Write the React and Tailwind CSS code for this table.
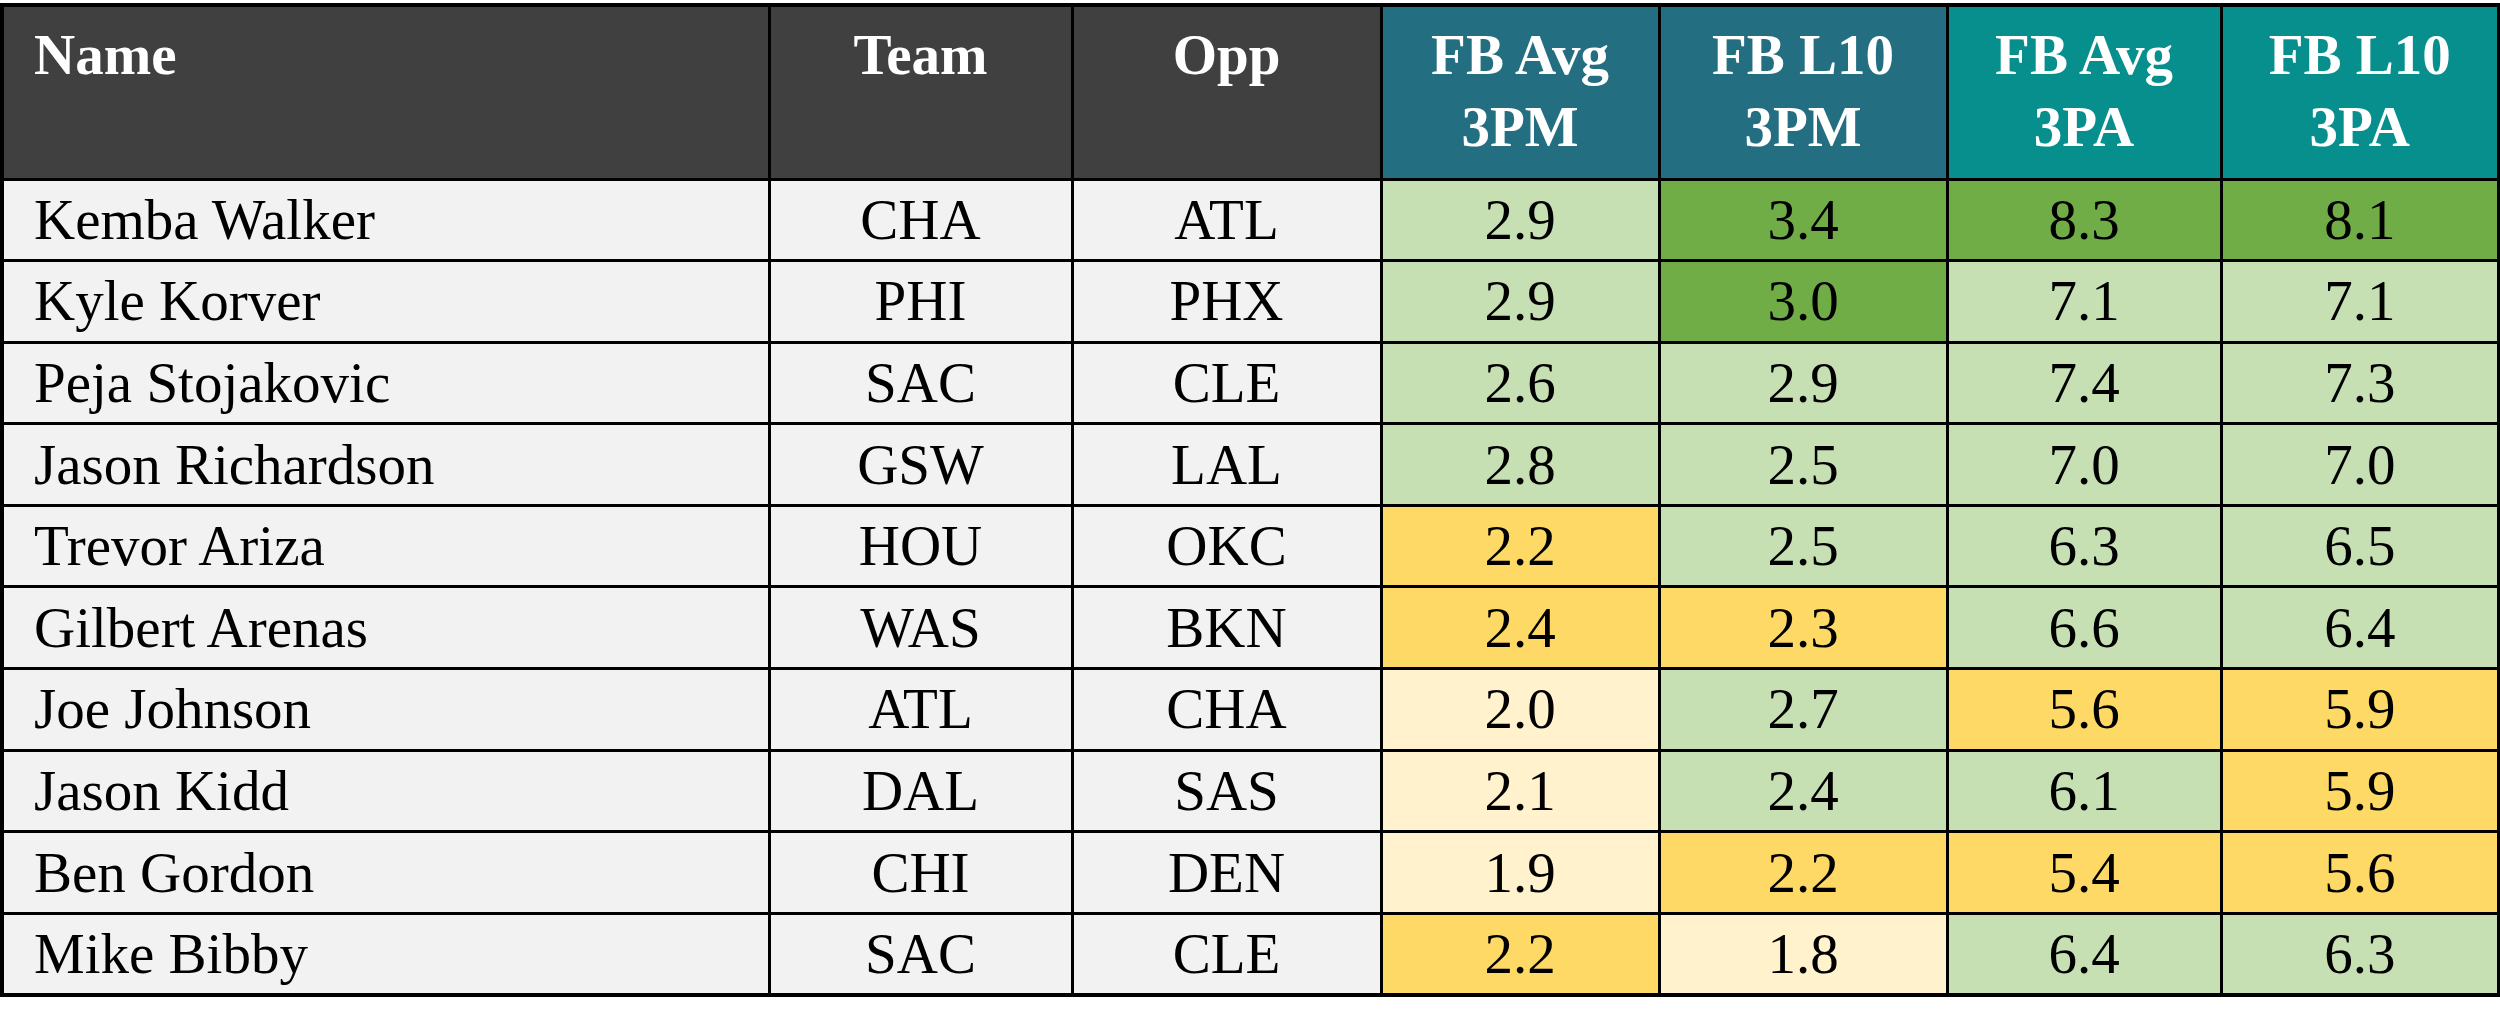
import React from 'react';

const LG = 'bg-[#c6e0b4]';
const G = 'bg-[#70ad47]';
const Y = 'bg-[#ffd966]';
const LY = 'bg-[#fff2cc]';

const rows = [
  ['Kemba Walker', 'CHA', 'ATL', ['2.9', LG], ['3.4', G], ['8.3', G], ['8.1', G]],
  ['Kyle Korver', 'PHI', 'PHX', ['2.9', LG], ['3.0', G], ['7.1', LG], ['7.1', LG]],
  ['Peja Stojakovic', 'SAC', 'CLE', ['2.6', LG], ['2.9', LG], ['7.4', LG], ['7.3', LG]],
  ['Jason Richardson', 'GSW', 'LAL', ['2.8', LG], ['2.5', LG], ['7.0', LG], ['7.0', LG]],
  ['Trevor Ariza', 'HOU', 'OKC', ['2.2', Y], ['2.5', LG], ['6.3', LG], ['6.5', LG]],
  ['Gilbert Arenas', 'WAS', 'BKN', ['2.4', Y], ['2.3', Y], ['6.6', LG], ['6.4', LG]],
  ['Joe Johnson', 'ATL', 'CHA', ['2.0', LY], ['2.7', LG], ['5.6', Y], ['5.9', Y]],
  ['Jason Kidd', 'DAL', 'SAS', ['2.1', LY], ['2.4', LG], ['6.1', LG], ['5.9', Y]],
  ['Ben Gordon', 'CHI', 'DEN', ['1.9', LY], ['2.2', Y], ['5.4', Y], ['5.6', Y]],
  ['Mike Bibby', 'SAC', 'CLE', ['2.2', Y], ['1.8', LY], ['6.4', LG], ['6.3', LG]],
];

const headers = [
  { label: ['Name'], bg: 'bg-[#404040]', align: 'text-left pl-[30px]' },
  { label: ['Team'], bg: 'bg-[#404040]', align: 'text-center' },
  { label: ['Opp'], bg: 'bg-[#404040]', align: 'text-center' },
  { label: ['FB Avg', '3PM'], bg: 'bg-[#246e82]', align: 'text-center' },
  { label: ['FB L10', '3PM'], bg: 'bg-[#246e82]', align: 'text-center' },
  { label: ['FB Avg', '3PA'], bg: 'bg-[#078f8e]', align: 'text-center' },
  { label: ['FB L10', '3PA'], bg: 'bg-[#078f8e]', align: 'text-center' },
];

export default function App() {
  return (
    <div className="w-[2500px] h-[1029px] bg-white pt-[3px]" style={{ fontFamily: '"Liberation Serif", "Times New Roman", serif' }}>
      <table className="table-fixed border-collapse border-[4px] border-black w-[2497px] text-[57px] leading-[72px]">
        <colgroup>
          <col className="w-[767px]" />
          <col className="w-[303px]" />
          <col className="w-[309px]" />
          <col className="w-[278px]" />
          <col className="w-[288px]" />
          <col className="w-[274px]" />
          <col className="w-[278px]" />
        </colgroup>
        <thead>
          <tr>
            {headers.map((h, i) => (
              <th
                key={i}
                className={`${h.bg} ${h.align} align-top h-[174px] pt-[12px] border-[3px] border-black text-white font-bold`}
              >
                {h.label.map((l, j) => (
                  <div key={j}>{l}</div>
                ))}
              </th>
            ))}
          </tr>
        </thead>
        <tbody>
          {rows.map((r, i) => (
            <tr key={i}>
              <td className="bg-[#f2f2f2] border-[3px] border-black h-[81.6px] pl-[30px] text-black">{r[0]}</td>
              <td className="bg-[#f2f2f2] border-[3px] border-black text-center text-black">{r[1]}</td>
              <td className="bg-[#f2f2f2] border-[3px] border-black text-center text-black">{r[2]}</td>
              {r.slice(3).map(([v, bg], j) => (
                <td key={j} className={`${bg} border-[3px] border-black text-center text-black`}>{v}</td>
              ))}
            </tr>
          ))}
        </tbody>
      </table>
    </div>
  );
}
